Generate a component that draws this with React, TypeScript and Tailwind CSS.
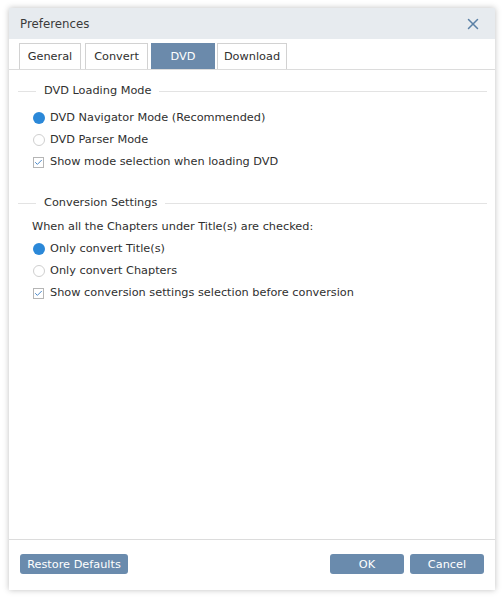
import { X, Check } from 'lucide-react';

function Radio({ checked, label }: { checked?: boolean; label: string }) {
  return (
    <div className="flex items-center h-[22px] pl-[24px]">
      {checked ? (
        <span className="w-[12px] h-[12px] rounded-full bg-[#2b88d8]" />
      ) : (
        <span className="w-[12px] h-[12px] rounded-full border border-[#cfcfcf] bg-white" />
      )}
      <span className="ml-[5px]">{label}</span>
    </div>
  );
}

function CheckItem({ label }: { label: string }) {
  return (
    <div className="flex items-center h-[22px] pl-[24px]">
      <span className="w-[11px] h-[11px] border border-[#b5b5b5] flex items-center justify-center bg-white">
        <Check size={9} strokeWidth={2.5} className="text-[#3d7fc4]" />
      </span>
      <span className="ml-[6px]">{label}</span>
    </div>
  );
}

function GroupTitle({ title }: { title: string }) {
  return (
    <div className="flex items-center h-[20px] pl-[9px] pr-[8px]">
      <div className="w-[18px] h-px bg-[#e3e3e3]" />
      <span className="px-[8px]">{title}</span>
      <div className="flex-1 h-px bg-[#e3e3e3]" />
    </div>
  );
}

const tabs = [
  { name: 'General', w: 'w-[62px]', ml: 'ml-0' },
  { name: 'Convert', w: 'w-[63px]', ml: 'ml-[4px]' },
  { name: 'DVD', w: 'w-[64px]', ml: 'ml-[3px]' },
  { name: 'Download', w: 'w-[70px]', ml: 'ml-[2px]' },
];

export default function App() {
  return (
    <div className="w-[504px] h-[600px] bg-white pt-[8px] pl-[9px]" style={{ fontFamily: '"DejaVu Sans", sans-serif' }}>
      <div className="w-[486px] h-[582px] bg-white flex flex-col shadow-[0_0_6px_rgba(0,0,0,0.25)] text-[11.3px] text-[#2f2f2f]">
        {/* Title bar */}
        <div className="h-[31px] bg-[#e7ebef] flex items-center justify-between pl-[11px] pr-[13px]">
          <span className="text-[11.8px] text-[#3a3a3a] pt-[3px]">Preferences</span>
          <X size={18} strokeWidth={2} className="text-[#5b80a6]" />
        </div>

        {/* Tabs */}
        <div className="mt-[4px] flex items-end pl-[10px] border-b border-[#dcdcdc] h-[27px]">
          {tabs.map(t =>
            t.name === 'DVD' ? (
              <div key={t.name} className={`h-[26px] ${t.w} ${t.ml} pt-[2px] bg-[#6b8aab] text-white flex items-center justify-center`}>
                {t.name}
              </div>
            ) : (
              <div key={t.name} className={`h-[26px] ${t.w} ${t.ml} pt-[2px] border border-b-0 border-[#d2d2d2] flex items-center justify-center`}>
                {t.name}
              </div>
            )
          )}
        </div>

        {/* Content */}
        <div className="flex-1 pt-[11px]">
          <GroupTitle title="DVD Loading Mode" />
          <div className="mt-[6px]">
            <Radio checked label="DVD Navigator Mode (Recommended)" />
            <Radio label="DVD Parser Mode" />
            <CheckItem label="Show mode selection when loading DVD" />
          </div>

          <div className="mt-[20px]">
            <GroupTitle title="Conversion Settings" />
          </div>
          <div className="mt-[3px]">
            <div className="h-[22px] flex items-center pl-[23px]">When all the Chapters under Title(s) are checked:</div>
            <Radio checked label="Only convert Title(s)" />
            <Radio label="Only convert Chapters" />
            <CheckItem label="Show conversion settings selection before conversion" />
          </div>
        </div>

        {/* Footer */}
        <div className="h-[51px] border-t border-[#dcdcdc] flex items-start justify-between pt-[14px] pl-[11px] pr-[11px]">
          <button className="h-[20px] w-[108px] pt-[2px] rounded-[3px] bg-[#6a8bad] text-white">Restore Defaults</button>
          <div className="flex gap-[6px]">
            <button className="h-[20px] w-[74px] pt-[2px] rounded-[3px] bg-[#6a8bad] text-white">OK</button>
            <button className="h-[20px] w-[74px] pt-[2px] rounded-[3px] bg-[#6a8bad] text-white">Cancel</button>
          </div>
        </div>
      </div>
    </div>
  );
}
